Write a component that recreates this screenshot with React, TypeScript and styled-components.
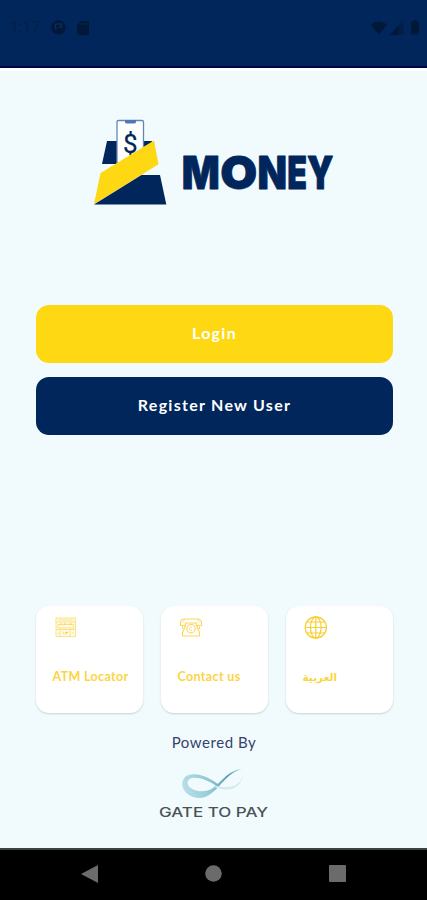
import React from "react";
import styled, { createGlobalStyle } from "styled-components";

const NAVY = "#00265b";
const YELLOW = "#ffd814";

const GlobalStyle = createGlobalStyle`
  * { box-sizing: border-box; }
  body { margin: 0; font-family: Lato, "Noto Sans", sans-serif; }
  svg { display: block; overflow: visible; }
`;

const Screen = styled.div`
  width: 427px;
  height: 900px;
  display: flex;
  flex-direction: column;
  background: #f1fbfd;
  overflow: hidden;
`;

const StatusBar = styled.header`
  flex: none;
  height: 68px;
  padding: 19px 7px 0 10px;
  display: flex;
  justify-content: space-between;
  background: ${NAVY};
  border-bottom: 2px solid #000047;
  color: #011838;
`;

const StatusGroup = styled.div<{ $gap: number }>`
  display: flex;
  align-items: center;
  height: 17px;
  gap: ${(p) => p.$gap}px;
`;

const Clock = styled.span`
  width: 30px;
  font: 15.5px/17px Roboto, sans-serif;
  white-space: nowrap;
  color: #031e49;
`;

const Content = styled.main`
  flex: 1;
  display: flex;
  flex-direction: column;
  align-items: center;
  border-top: 3px solid #fbffff;
  padding: 47px 34.5px 0 35.5px;
`;

const Brand = styled.div`
  height: 90px;
  width: 244px;
`;

const Actions = styled.div`
  width: 357px;
  margin-top: 96.5px;
  display: flex;
  flex-direction: column;
  gap: 14px;
`;

const ActionButton = styled.button<{ $bg: string }>`
  height: 58px;
  border: 0;
  border-radius: 13px;
  padding: 0 0 2px 1px;
  background: ${(p) => p.$bg};
  color: #fff;
  font: 700 16px/20px Lato, sans-serif;
  letter-spacing: 1.27px;
`;

const Cards = styled.div`
  width: 357px;
  margin-top: 171.5px;
  display: grid;
  grid-template-columns: repeat(3, 107px);
  justify-content: space-between;
`;

const Card = styled.button`
  height: 107px;
  border: 0;
  border-radius: 13px;
  background: #fff;
  box-shadow: 0 1px 2px rgba(80, 110, 115, 0.28);
  padding: 10px 0 0 17px;
  display: flex;
  flex-direction: column;
  align-items: flex-start;
  gap: 27px;
`;

const CardLabel = styled.span<{ $spacing: number; $size?: number }>`
  font: 700 ${(p) => p.$size ?? 12.5}px/20px Lato, "DejaVu Sans", sans-serif;
  letter-spacing: ${(p) => p.$spacing}px;
  color: #fbd542;
  white-space: nowrap;
`;

const Footer = styled.footer`
  display: flex;
  flex-direction: column;
  align-items: center;
  gap: 16px;
  margin-top: 19px;
`;

const Powered = styled.span`
  font: 15px/20px Lato, sans-serif;
  letter-spacing: 0.55px;
  color: #37416c;
`;

const NavBar = styled.nav`
  flex: none;
  height: 52px;
  border-top: 2px solid #3b4344;
  background: #000;
  padding: 15px 81px 0;
  display: flex;
  justify-content: space-between;
`;

const WORDMARK = [
  { letter: "M", x: 181.8, width: 38 },
  { letter: "O", x: 220.3, width: 37 },
  { letter: "N", x: 257.6, width: 29.5 },
  { letter: "E", x: 287.2, width: 19.8 },
  { letter: "Y", x: 307.1, width: 26.5 },
];

function BrandLogo() {
  return (
    <svg width="244" height="90" viewBox="92 118 244 90">
      <path d="M107 141H152L147 164H102Z" fill={NAVY} />
      <rect x="117" y="120.5" width="26.5" height="48" rx="1.5" fill="#fff" stroke="#6386b7" strokeWidth="1.3" />
      <path d="M125 120H136V122Q136 123.5 134 123.5H127Q125 123.5 125 122Z" fill="#5279af" />
      <text x="130.2" y="152.8" textAnchor="middle" fontFamily="Roboto, sans-serif" fontSize="26" fill={NAVY} stroke={NAVY} strokeWidth=".2">$</text>
      <path d="M154 140.5L158.5 164.2L94 204.3L100.5 173Z" fill={YELLOW} />
      <path d="M141.5 175H160L166.3 204.5H94Z" fill={NAVY} />
      <text
        y="189.2"
        fontFamily="Inter, sans-serif"
        fontWeight="900"
        fontSize="46"
        fill={NAVY}
        stroke={NAVY}
        strokeWidth=".8"
        strokeLinejoin="round"
      >
        {WORDMARK.map(({ letter, x, width }) => (
          <tspan key={letter} x={x} textLength={width} lengthAdjust="spacingAndGlyphs">{letter}</tspan>
        ))}
      </text>
    </svg>
  );
}

function AtmIcon() {
  return (
    <svg width="24" height="24" viewBox="0 0 24 24" fill="none" stroke="#fbdc6a" strokeWidth=".8">
      <rect x="3" y="2" width="19.5" height="18.5" fill="#fffaea" />
      <path d="M3 6H22.5M5 4H20.5M5 8.5H20.5V12H5ZM3 13.5H22.5M7 14V20.5M10 15.5V18H14V15.5M17 14V20.5M20 16V18" />
      <path d="M7 8H9M11 8H13M16 8H19M5 17.5H6M12 16.5H15" stroke="#f7c736" />
    </svg>
  );
}

function PhoneIcon() {
  return (
    <svg width="24" height="24" viewBox="0 0 24 24" fill="none" stroke="#fbd65b" strokeWidth="1.1" strokeLinejoin="round">
      <path d="M2.5 9.5V7Q2.5 3 6.5 3H19.5Q23.5 3 23.5 7V9.5H18.5V7H7.5V9.5Z" />
      <path d="M7.5 7V9.5L4.5 16.5V20H21.5V16.5L18.5 9.5M4.5 10.5V13M21.5 10.5V13" />
      <circle cx="13" cy="12.7" r="4.2" />
      <path d="M14 11.5A1.6 1.6 0 1 0 14 14M6.5 3.5L4.5 6.5M19.5 3.5L21.5 6.5" strokeWidth=".8" />
    </svg>
  );
}

function GlobeIcon() {
  return (
    <svg width="24" height="24" viewBox="0 0 24 24" fill="none" stroke="#f9ce32" strokeWidth="1.2">
      <circle cx="12.8" cy="11.5" r="10.6" />
      <ellipse cx="12.8" cy="11.5" rx="5.3" ry="10.6" />
      <path d="M12.8 1V22M2.3 11.5H23.3M4 6H21.6M4 17H21.6" />
    </svg>
  );
}

function GateLogo() {
  return (
    <svg width="108" height="50" viewBox="160 768 108 50">
      <defs>
        <linearGradient id="ribbon" x1="182" y1="790" x2="243" y2="770" gradientUnits="userSpaceOnUse">
          <stop offset="0" stopColor="#b9e0e8" />
          <stop offset=".45" stopColor="#91c8d6" />
          <stop offset=".75" stopColor="#4c9aac" />
          <stop offset="1" stopColor="#a1cbd2" />
        </linearGradient>
      </defs>
      <path d="M220 786C208 775 192 771 185 777C178 785 185 797 199 798C217 798 223 773 242 769C229 770 222 781 213 788C204 794 191 791 188 785C185 774 203 776 218 787Z" fill="url(#ribbon)" />
      <path d="M217 786C228 789 240 787 243 775C241 790 227 792 214 787Z" fill="#d3e9ed" />
      <text x="159" y="816.8" textLength="109" lengthAdjust="spacingAndGlyphs" fontFamily="Inter, sans-serif" fontSize="13" fontWeight="500" fill="#4b5254">
        GATE TO PAY
      </text>
    </svg>
  );
}

export default function App() {
  return (
    <>
      <GlobalStyle />
      <Screen>
        <StatusBar>
          <StatusGroup $gap={11}>
            <Clock>1:17</Clock>
            <svg width="15" height="15" viewBox="0 0 15 15">
              <circle cx="7.5" cy="7.5" r="7.2" fill="currentColor" />
              <path d="M4.5 10V4H10.5V7H7.5" fill="none" stroke="#062c5d" strokeWidth="1.6" />
            </svg>
            <svg width="12" height="14" viewBox="0 0 12 14">
              <path d="M4 0H11Q12 0 12 1V13Q12 14 11 14H1Q0 14 0 13V4Z" fill="currentColor" />
              <path d="M4.5 2V4M7 2V4M9.5 2V4" stroke="#062c5d" />
            </svg>
          </StatusGroup>
          <StatusGroup $gap={3}>
            <svg width="16" height="14" viewBox="0 0 16 14">
              <path d="M0 3.5Q8-2.5 16 3.5L8 14Z" fill="currentColor" />
            </svg>
            <svg width="14" height="14" viewBox="0 0 14 14">
              <path d="M0 14L13.5 0V14Z" fill="currentColor" opacity=".5" />
              <path d="M0 14L8.5 5V14Z" fill="currentColor" />
            </svg>
            <svg width="13" height="15" viewBox="0 0 13 15">
              <path d="M6 0H10V1.5H12V14.5H4V1.5H6Z" fill="currentColor" />
            </svg>
          </StatusGroup>
        </StatusBar>
        <Content>
          <Brand>
            <BrandLogo />
          </Brand>
          <Actions>
            <ActionButton $bg={YELLOW}>Login</ActionButton>
            <ActionButton $bg={NAVY}>Register New User</ActionButton>
          </Actions>
          <Cards>
            <Card>
              <AtmIcon />
              <CardLabel $spacing={0.35}>ATM Locator</CardLabel>
            </Card>
            <Card>
              <PhoneIcon />
              <CardLabel $spacing={0.35}>Contact us</CardLabel>
            </Card>
            <Card>
              <GlobeIcon />
              <CardLabel $spacing={0} $size={10.5} lang="ar" dir="rtl">العربية</CardLabel>
            </Card>
          </Cards>
          <Footer>
            <Powered>Powered By</Powered>
            <GateLogo />
          </Footer>
        </Content>
        <NavBar>
          <svg width="17" height="18" viewBox="0 0 17 18">
            <path d="M0 9L17 0V18Z" fill="#6b6b6b" />
          </svg>
          <svg width="17" height="17" viewBox="0 0 17 17">
            <circle cx="8.5" cy="8.5" r="8.3" fill="#6b6b6b" />
          </svg>
          <svg width="17" height="17" viewBox="0 0 17 17">
            <rect width="17" height="17" rx="1" fill="#6b6b6b" />
          </svg>
        </NavBar>
      </Screen>
    </>
  );
}
